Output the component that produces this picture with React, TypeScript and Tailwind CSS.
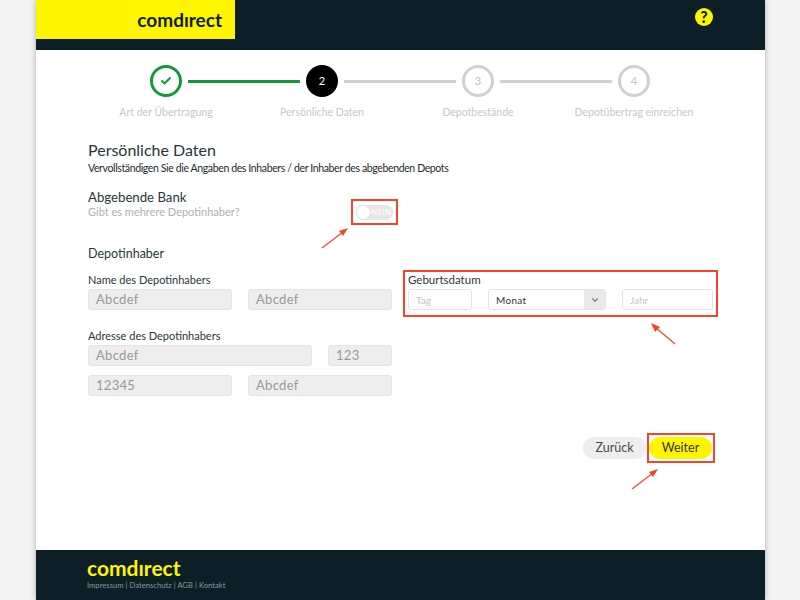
import { Check, ChevronDown } from 'lucide-react'

const steps = ['Art der Übertragung', 'Persönliche Daten', 'Depotbestände', 'Depotübertrag einreichen']

function GrayField({ text, className }: { text: string; className: string }) {
  return (
    <div className={`h-[21px] rounded-[3px] border border-[#e4e4e4] bg-[#eeeeee] pl-[7px] text-[13px] leading-[19px] tracking-[0.3px] text-[#999999] ${className}`}>
      {text}
    </div>
  )
}

function Stepper() {
  return (
    <div>
      <div className="ml-[62px] flex items-center gap-[6px] pt-[15px]">
        <div className="flex h-[32px] w-[32px] items-center justify-center rounded-full border-[3px] border-[#129a3a]">
          <Check size={12} strokeWidth={4} className="text-[#129a3a]" />
        </div>
        <div className="h-[3px] w-[112px] bg-[#129a3a]" />
        <div className="flex h-[32px] w-[32px] items-center justify-center rounded-full bg-black text-[11px] text-white">2</div>
        <div className="h-[3px] w-[112px] bg-[#d0d0d0]" />
        <div className="flex h-[32px] w-[32px] items-center justify-center rounded-full border-[3px] border-[#d0d0d0] text-[11px] text-[#c4c4c4]">3</div>
        <div className="h-[3px] w-[112px] bg-[#d0d0d0]" />
        <div className="flex h-[32px] w-[32px] items-center justify-center rounded-full border-[3px] border-[#d0d0d0] text-[11px] text-[#c4c4c4]">4</div>
      </div>
      <div className="mt-[8px] grid w-[624px] grid-cols-4 text-center text-[10.5px] leading-[14px] text-[#c8c8c8]">
        {steps.map((s) => (
          <div key={s} className="whitespace-nowrap">{s}</div>
        ))}
      </div>
    </div>
  )
}

export default function App() {
  return (
    <div className="relative h-[600px] w-[800px] overflow-hidden bg-[#f4f4f4] font-['Lato',sans-serif] text-[#27363c]">
      <div className="ml-[36px] flex h-[600px] w-[729px] flex-col shadow-[0_0_6px_rgba(0,0,0,0.3)]">
        {/* Header */}
        <div className="flex h-[50px] justify-between bg-[#0c1f27]">
          <div className="flex h-[39px] w-[199px] items-center justify-end bg-[#fff500] pr-[13px]">
            <span className="text-[19px] font-bold leading-none text-[#0c1f27]">comdırect</span>
          </div>
          <div className="mr-[52px] mt-[8px] flex h-[18px] w-[18px] items-center justify-center rounded-full bg-[#fff500] text-[16px] font-black leading-none text-[#0c1f27]">?</div>
        </div>

        {/* Main */}
        <div className="flex-1 bg-white px-[52px]">
          <Stepper />

          <h1 className="mt-[20px] text-[16px] leading-[22px]">Persönliche Daten</h1>
          <p className="text-[10.5px] leading-[15px] tracking-[-0.37px] text-[#1c2a30]">Vervollständigen Sie die Angaben des Inhabers / der Inhaber des abgebenden Depots</p>

          <div className="mt-[12px] flex h-[37px] items-start">
            <div className="w-[263px]">
              <div className="text-[13.2px] leading-[18px]">Abgebende Bank</div>
              <div className="text-[11px] leading-[12px] text-[#b0b0b0]">Gibt es mehrere Depotinhaber?</div>
            </div>
            <div className="mt-[11px] flex h-[26px] w-[47px] items-center justify-center border-2 border-[#f4452a]">
              <div className="flex h-[15px] w-[37px] items-center rounded-full bg-[#e6e6e6]">
                <div className="h-[15px] w-[15px] shrink-0 rounded-full border border-[#e0e0e0] bg-white" />
                <span className="text-[8px] tracking-[0.3px] text-white">NEIN</span>
              </div>
            </div>
          </div>

          <div className="mt-[20px] text-[12.5px] leading-[17px]">Depotinhaber</div>

          <div className="mt-[10px] flex items-start">
            <div className="w-[304px]">
              <div className="text-[11px] leading-[15px]">Name des Depotinhabers</div>
              <div className="mt-[2px] flex gap-[16px]">
                <GrayField text="Abcdef" className="w-[144px]" />
                <GrayField text="Abcdef" className="w-[144px]" />
              </div>
              <div className="mt-[18px] text-[11px] leading-[15px]">Adresse des Depotinhabers</div>
              <div className="mt-[2px] flex gap-[16px]">
                <GrayField text="Abcdef" className="w-[224px]" />
                <GrayField text="123" className="w-[64px]" />
              </div>
              <div className="mt-[9px] flex gap-[16px]">
                <GrayField text="12345" className="w-[144px]" />
                <GrayField text="Abcdef" className="w-[144px]" />
              </div>
            </div>

            <div className="-mt-[2px] ml-[11px] h-[47px] w-[316px] border-2 border-[#f4452a] px-[3px]">
              <div className="text-[11.5px] leading-[15px] text-[#333]">Geburtsdatum</div>
              <div className="mt-[2px] flex gap-[16px]">
                <div className="h-[21px] w-[64px] rounded-[3px] border border-[#e4e4e4] pl-[7px] text-[10px] leading-[20px] text-[#c4c4c4]">Tag</div>
                <div className="flex h-[21px] w-[118px] overflow-hidden rounded-[3px] border border-[#e4e4e4]">
                  <div className="flex-1 pl-[7px] text-[10px] leading-[20px] tracking-[0.3px] text-[#333]">Monat</div>
                  <div className="flex w-[21px] items-center justify-center bg-[#e9e9e9]">
                    <ChevronDown size={10} strokeWidth={2.5} className="text-[#555]" />
                  </div>
                </div>
                <div className="h-[21px] w-[91px] rounded-[3px] border border-[#e4e4e4] pl-[7px] text-[10px] leading-[20px] text-[#c4c4c4]">Jahr</div>
              </div>
            </div>
          </div>

          <div className="mt-[37px] flex items-center justify-end">
            <div className="mr-[1px] flex h-[22px] w-[63px] items-center justify-center rounded-full bg-[#eeeeee] text-[12.5px] text-[#4a4a4a]">Zurück</div>
            <div className="-mr-[2px] flex h-[30px] w-[68px] items-center border-2 border-[#f4452a]">
              <div className="flex h-[22px] w-[63px] items-center justify-center rounded-full bg-[#fff500] text-[12.5px] text-[#333]">Weiter</div>
            </div>
          </div>
        </div>

        {/* Footer */}
        <div className="h-[50px] bg-[#0c1f27] pl-[51px] pt-[7px]">
          <div className="text-[21px] font-bold leading-[21px] text-[#fff500]">comdırect</div>
          <div className="mt-[2px] text-[7.5px] leading-[11px] tracking-[0.08px] text-[#8e979b]">Impressum | Datenschutz | AGB | Kontakt</div>
        </div>
      </div>

      {/* Annotation arrows */}
      <svg className="absolute left-0 top-0 pointer-events-none" width="800" height="600" fill="none">
        <g stroke="#f4452a" strokeWidth="1.2">
          <line x1="322" y1="248" x2="343" y2="232" />
          <line x1="675" y1="344" x2="655" y2="327" />
          <line x1="632" y1="489" x2="653" y2="473" />
        </g>
        <g fill="#f4452a">
          <polygon points="348,228 343,236 339,231" />
          <polygon points="651,323 660,327 655,332" />
          <polygon points="658,469 653,477 649,472" />
        </g>
      </svg>
    </div>
  )
}
